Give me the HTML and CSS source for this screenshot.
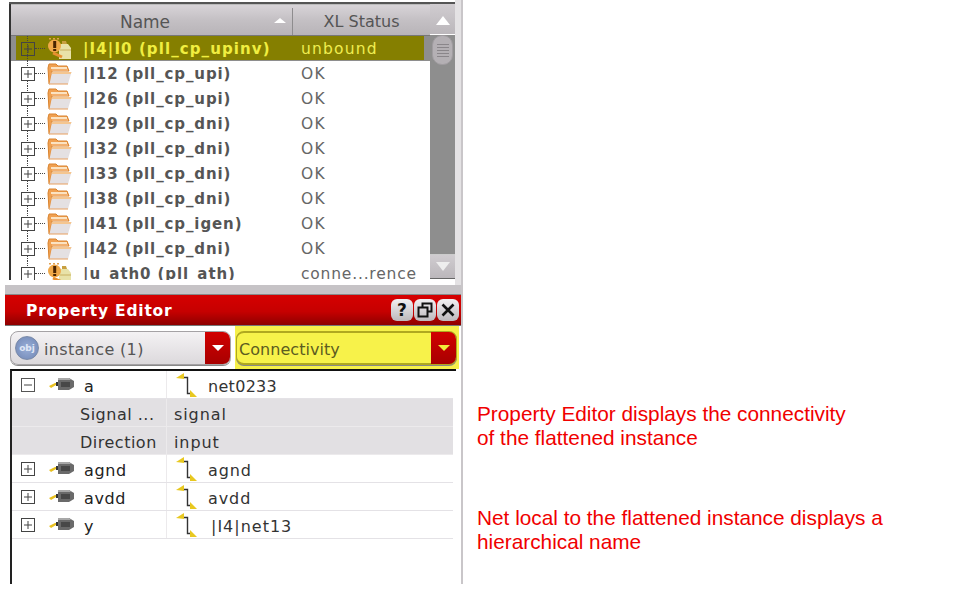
FILE: index.html
```html
<!DOCTYPE html>
<html lang="en">
<head>
<meta charset="utf-8">
<title>Property Editor</title>
<link rel="stylesheet" href="styles.css">
</head>
<body>
<svg class="defs" width="0" height="0" aria-hidden="true">
  <defs>
    <symbol id="plus" viewBox="0 0 14 14"><rect x="0.5" y="0.5" width="13" height="13" fill="none" stroke="currentColor"/><path d="M3 7h8M7 3v8" stroke="currentColor" fill="none"/></symbol>
    <symbol id="minus" viewBox="0 0 14 14"><rect x="0.5" y="0.5" width="13" height="13" fill="none" stroke="#555"/><path d="M3 7h8" stroke="#444" fill="none"/></symbol>
    <symbol id="folder" viewBox="0 0 25 22">
      <path d="M1 5 L2 1 H9 L11 3 H20 L22 8 H5 L3 21 H2 Z" fill="#f0a050" stroke="#d9832e" stroke-width="1"/>
      <path d="M4 4 H20 V6 H4Z" fill="#fbe3c2"/>
      <path d="M5 6 H21 V8 H5Z" fill="#f2b070"/>
      <path d="M5 9 H24.5 L21 21 H2.5 Z" fill="#e4e0e2"/>
      <path d="M5 9 H24.5 L23.8 11 H4.6Z" fill="#f5c690"/>
      <path d="M3 21 H21" stroke="#e8a060" stroke-width="1"/>
    </symbol>
    <symbol id="warnfolder" viewBox="0 0 25 22">
      <path d="M12 6 H21 L24 10 V21 H12 Z" fill="#e8e2a8"/>
      <path d="M15 3 h4 l1 3 h-5z" fill="#c8a040"/>
      <path d="M13 12 H24" stroke="#c8b060" stroke-width="1"/>
      <circle cx="7.5" cy="8" r="6.5" fill="#f0a848"/>
      <path d="M6 15 L15 19" stroke="#e89030" stroke-width="3"/>
      <rect x="6.2" y="3" width="3" height="7" fill="#4a2400"/>
      <rect x="6.2" y="11" width="3" height="2" fill="#4a2400"/>
      <path d="M2 0.8 h11" stroke="#e0a050" stroke-width="1.5" stroke-dasharray="2 2"/>
    </symbol>
    <symbol id="pin" viewBox="0 0 25 14">
      <path d="M0 9 L6 6 L10 6 L10 8 L7 8 L2 11 Z" fill="#e8c020"/>
      <path d="M7 5 H10 V9 H7 Z" fill="#333"/>
      <path d="M9 1 H20 L25 4 V10 L20 13 H9 Z" fill="#6a6a6a"/>
      <path d="M9 1 H20 L22 3 H9 Z" fill="#a8a8a8"/>
      <path d="M12 5 H21 V10 H12 Z" fill="#484848"/>
    </symbol>
    <symbol id="net" viewBox="0 0 21 24">
      <path d="M8 4.5 H11.5 V20.5 H16" fill="none" stroke="#333" stroke-width="1.4"/>
      <path d="M0 5 L8 0 V6 Z" fill="#e8c820"/>
      <path d="M14 17 L21 24 H14 Z" fill="#e8c820"/>
    </symbol>
  </defs>
</svg>

<div class="page">
  <div class="panel">
    <div class="tree">
      <div class="tree-box">
        <div class="tree-main">
          <div class="tree-head">
            <div class="head-name"><span>Name</span><i class="sort"></i></div>
            <div class="head-status">XL Status</div>
          </div>
          <div class="tree-rows">
            <div class="row selected"><span class="exp"><svg class="box"><use href="#plus"/></svg></span><svg class="folder"><use href="#warnfolder"/></svg><span class="inst">|I4|I0 (pll_cp_upinv)</span><span class="stat">unbound</span></div>
            <div class="row"><span class="exp"><svg class="box"><use href="#plus"/></svg></span><svg class="folder"><use href="#folder"/></svg><span class="inst">|I12 (pll_cp_upi)</span><span class="stat">OK</span></div>
            <div class="row"><span class="exp"><svg class="box"><use href="#plus"/></svg></span><svg class="folder"><use href="#folder"/></svg><span class="inst">|I26 (pll_cp_upi)</span><span class="stat">OK</span></div>
            <div class="row"><span class="exp"><svg class="box"><use href="#plus"/></svg></span><svg class="folder"><use href="#folder"/></svg><span class="inst">|I29 (pll_cp_dni)</span><span class="stat">OK</span></div>
            <div class="row"><span class="exp"><svg class="box"><use href="#plus"/></svg></span><svg class="folder"><use href="#folder"/></svg><span class="inst">|I32 (pll_cp_dni)</span><span class="stat">OK</span></div>
            <div class="row"><span class="exp"><svg class="box"><use href="#plus"/></svg></span><svg class="folder"><use href="#folder"/></svg><span class="inst">|I33 (pll_cp_dni)</span><span class="stat">OK</span></div>
            <div class="row"><span class="exp"><svg class="box"><use href="#plus"/></svg></span><svg class="folder"><use href="#folder"/></svg><span class="inst">|I38 (pll_cp_dni)</span><span class="stat">OK</span></div>
            <div class="row"><span class="exp"><svg class="box"><use href="#plus"/></svg></span><svg class="folder"><use href="#folder"/></svg><span class="inst">|I41 (pll_cp_igen)</span><span class="stat">OK</span></div>
            <div class="row"><span class="exp"><svg class="box"><use href="#plus"/></svg></span><svg class="folder"><use href="#folder"/></svg><span class="inst">|I42 (pll_cp_dni)</span><span class="stat">OK</span></div>
            <div class="row"><span class="exp"><svg class="box"><use href="#plus"/></svg></span><svg class="folder"><use href="#warnfolder"/></svg><span class="inst">|u_ath0 (pll_ath)</span><span class="stat stat-long">conne...rence</span></div>
          </div>
        </div>
        <div class="scrollbar">
          <div class="sb-btn sb-up"><i class="tri-up"></i></div>
          <div class="sb-thumb"><i></i><i></i><i></i><i></i><i></i></div>
          <div class="sb-track"></div>
          <div class="sb-btn sb-down"><i class="tri-down"></i></div>
        </div>
      </div>
    </div>

    <div class="strip"></div>

    <div class="titlebar">
      <span class="title">Property Editor</span>
      <div class="win-btns">
        <span class="win-btn">?</span>
        <span class="win-btn"><svg width="16" height="16" viewBox="0 0 16 16"><path d="M5.5 5V1.5h9v8H11M1.5 5.5h9v9h-9z" fill="none" stroke="#111" stroke-width="2"/></svg></span>
        <span class="win-btn"><svg width="14" height="14" viewBox="0 0 14 14"><path d="M1.5 1.5l11 11M12.5 1.5l-11 11" stroke="#111" stroke-width="2.6"/></svg></span>
      </div>
    </div>

    <div class="combos">
      <div class="combo combo-plain">
        <span class="obj"><span>obj</span></span>
        <span class="combo-text">instance (1)</span>
        <span class="combo-arrow"><i></i></span>
      </div>
      <div class="combo combo-yellow">
        <span class="combo-text">Connectivity</span>
        <span class="combo-arrow"><i></i></span>
      </div>
    </div>

    <div class="props">
      <div class="prop"><div class="c1"><svg class="box"><use href="#minus"/></svg><svg class="pin"><use href="#pin"/></svg><span class="pname">a</span></div><div class="c2"><svg class="net"><use href="#net"/></svg><span class="tight">net0233</span></div></div>
      <div class="prop sub"><div class="c1"><span class="subname">Signal ...</span></div><div class="c2"><span>signal</span></div></div>
      <div class="prop sub"><div class="c1"><span class="subname">Direction</span></div><div class="c2"><span>input</span></div></div>
      <div class="prop"><div class="c1"><svg class="box"><use href="#plus"/></svg><svg class="pin"><use href="#pin"/></svg><span class="pname">agnd</span></div><div class="c2"><svg class="net"><use href="#net"/></svg><span>agnd</span></div></div>
      <div class="prop"><div class="c1"><svg class="box"><use href="#plus"/></svg><svg class="pin"><use href="#pin"/></svg><span class="pname">avdd</span></div><div class="c2"><svg class="net"><use href="#net"/></svg><span>avdd</span></div></div>
      <div class="prop"><div class="c1"><svg class="box"><use href="#plus"/></svg><svg class="pin"><use href="#pin"/></svg><span class="pname">y</span></div><div class="c2"><svg class="net"><use href="#net"/></svg><span class="hier">|I4|net13</span></div></div>
    </div>
  </div>

  <div class="notes">
    <p class="note note-a">Property Editor displays the connectivity<br>of the flattened instance</p>
    <p class="note note-b">Net local to the flattened instance displays a<br>hierarchical name</p>
  </div>
</div>
</body>
</html>
```

FILE: styles.css
```css
* { box-sizing: border-box; }
html, body { margin: 0; padding: 0; background: #fff; }
body { width: 956px; height: 594px; overflow: hidden; font-family: "DejaVu Sans", sans-serif; }
.defs { position: absolute; }

.page { display: flex; align-items: flex-start; padding-left: 5px; }
.panel { width: 458px; height: 584px; flex: none; border-right: 2px solid #c9c6c9; }

/* Tree */
.tree { height: 285px; padding: 2px 0 0 4px; background: linear-gradient(to right, #fff 450px, #e4e2e4 450px); }
.tree-box { display: flex; width: 446px; height: 278px; border-top: 2px solid #555; background: #fff; align-items: flex-start; }
.tree-main { width: 421px; height: 276px; border-left: 2px solid #333; background: #fff; overflow: hidden; flex: none; }
.tree-head { display: flex; height: 32px; background: linear-gradient(#d8d4d8, #c4c0c4 50%, #b8b4b8); border-top: 1px solid #bbb; border-bottom: 1px solid #777; color: #555; font-size: 17px; padding-top: 3px; }
.head-name { width: 282px; position: relative; display: flex; align-items: center; justify-content: center; padding-right: 13px; border-right: 1px solid #8e8c8e; }
.head-status { flex: 1; display: flex; align-items: center; justify-content: center; font-size: 16px; }
.sort { position: absolute; right: 6px; top: 10px; border: 6px solid transparent; border-top: 0; border-bottom: 5px solid #fff; }

.row { display: flex; align-items: center; height: 25px; position: relative; background: #fff; }
.row.selected { background: linear-gradient(to right, #8e8e8e 5px, transparent 5px, transparent 413px, #8e8e8e 413px), linear-gradient(#857f00 24px, #8e8e8e 24px); }
.exp { width: 36px; height: 100%; flex: none; padding-left: 10px; display: flex; align-items: center; position: relative; color: #444; }
.exp::before { content: ""; position: absolute; left: 16px; top: 0; bottom: 0; border-left: 1px dotted #444; }
.exp::after { content: ""; position: absolute; left: 24px; top: 12px; width: 10px; border-top: 1px dotted #444; }
.box { width: 14px; height: 14px; position: relative; z-index: 1; background: #fff; flex: none; color: #444; }
.selected .box { background: transparent; }
.folder { width: 25px; height: 22px; flex: none; }
.inst { width: 229px; flex: none; padding: 1px 0 0 11px; font-weight: 700; font-size: 15px; letter-spacing: .9px; color: #555; white-space: nowrap; }
.selected .inst { color: #f0ee40; letter-spacing: 1.1px; }
.stat { font-size: 15.5px; color: #666; white-space: nowrap; letter-spacing: 1.2px; padding-top: 1px; }
.stat-long { letter-spacing: .8px; }
.selected .stat { color: #efed50; }

/* Scrollbar */
.scrollbar { width: 25px; height: 275px; background: #8e8e8e; display: flex; flex-direction: column; align-items: stretch; flex: none; }
.sb-btn { flex: none; background: linear-gradient(#d0ccd0, #bbb7bb); display: flex; align-items: center; justify-content: center; }
.sb-up { height: 31px; padding-top: 3px; border-bottom: 1px solid #fff; }
.sb-down { height: 25px; border-bottom: 1px solid #666; border-top: 1px solid #ccc; }
.tri-up { border: 7px solid transparent; border-top: 0; border-bottom: 9px solid #fff; }
.tri-down { border: 7px solid transparent; border-bottom: 0; border-top: 9px solid #eee; }
.sb-thumb { height: 30px; flex: none; margin: 0 2px; border-radius: 10px; background: #b4b0b4; border: 1px solid #a09ca0; display: flex; flex-direction: column; align-items: center; justify-content: center; gap: 2px; }
.sb-thumb i { width: 12px; height: 1px; background: #8a868a; }
.sb-track { flex: 1; }

/* Title bar */
.strip { height: 10px; background: #c6c3c6; border-bottom: 1px solid #888; }
.titlebar { height: 31px; display: flex; align-items: center; justify-content: space-between; padding: 0 2px 0 21px; background: linear-gradient(#d60000, #c60000 55%, #8e0000); border-bottom: 1px solid #777; }
.title { color: #fff; font-weight: 700; font-size: 15.5px; letter-spacing: .8px; padding-top: 2px; }
.win-btns { display: flex; gap: 1px; }
.win-btn { width: 22px; height: 22px; border-radius: 6px; background: linear-gradient(#f2f0f2, #bcb8bc); display: flex; align-items: center; justify-content: center; font-weight: 700; font-size: 17px; color: #111; }

/* Combos */
.combos { height: 43px; display: flex; gap: 5px; padding: 5px 0 0 5px; background: linear-gradient(to right, #fff 230px, #f6f04a 230px, #f6f04a 454px, #fff 454px); }
.combo { width: 221px; height: 34px; flex: none; display: flex; align-items: center; border-radius: 8px; font-size: 16px; position: relative; }
.combo-plain { background: linear-gradient(#f4f2f4, #dcd9dc); border: 1px solid #a5a2a5; box-shadow: 0 1px 0 #888; color: #555; }
.combo-yellow { background: #f7f24a; border: 1px solid #b0a820; border-top-width: 2px; border-bottom-width: 2px; box-shadow: 0 1px 0 #888; color: #5c5c20; padding-left: 2px; }
.obj { width: 24px; height: 24px; margin-left: 4px; border-radius: 50%; flex: none; background: radial-gradient(circle at 50% 50%, #9aafd8, #6f86b4); border: 1px solid #7a8aa8; display: flex; align-items: center; justify-content: center; color: #dfe6f5; font-size: 9px; font-weight: 700; }
.combo-text { padding: 3px 0 0 5px; flex: 1; white-space: nowrap; letter-spacing: .35px; }
.combo-yellow .combo-text { padding-left: 0; letter-spacing: .05px; }
.combo-arrow { width: 25px; height: 32px; align-self: center; flex: none; background: linear-gradient(#d10000, #a80000); border-radius: 0 7px 7px 0; display: flex; align-items: center; justify-content: center; }
.combo-arrow i { border: 6px solid transparent; border-bottom: 0; border-top: 6px solid #fff; }
.combo-yellow .combo-arrow i { border-top-color: #f2ea3a; }

/* Property table */
.props { margin: 0 0 0 5px; height: 215px; width: 446px; border-top: 2px solid #111; border-left: 2px solid #222; background: #fff; }
.prop { display: flex; height: 28px; width: 441px; padding-top: 4px; border-bottom: 1px solid #e4e2e6; color: #333; font-size: 16px; }
.prop.sub { background: #e2e0e3; border-bottom: 1px solid #eceaec; }
.c1 { width: 155px; flex: none; display: flex; align-items: center; padding-left: 9px; border-right: 1px solid #eceaec; margin-top: -4px; padding-top: 4px; }
.c1 .box { margin-top: -4px; }
.pin { width: 25px; height: 14px; margin-left: 14px; margin-top: -5px; flex: none; }
.pname { padding-left: 10px; color: #222; letter-spacing: .6px; }
.subname { padding-left: 59px; letter-spacing: .5px; }
.c2 { flex: 1; display: flex; align-items: center; padding-left: 7px; letter-spacing: .9px; margin-top: -4px; padding-top: 4px; }
.net { width: 21px; height: 24px; margin-left: 2px; margin-right: 11px; flex: none; margin-top: -4px; }
.tight { letter-spacing: .3px; }
.hier { margin-left: 3px; letter-spacing: 1px; }

/* Annotations */
.notes { padding: 402px 0 0 14px; flex: 1; }
.note { margin: 0; color: #f00000; font-family: "Liberation Sans", Arial, sans-serif; font-size: 20.8px; line-height: 24px; white-space: nowrap; }
.note-b { margin-top: 56px; }
```
